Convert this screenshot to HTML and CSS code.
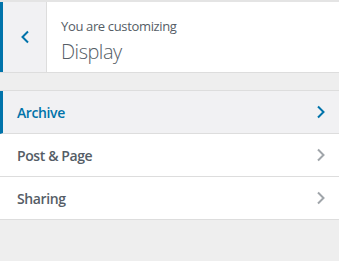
FILE: index.html
```html
<!DOCTYPE html>
<html lang="en">
<head>
  <meta charset="UTF-8" />
  <meta name="viewport" content="width=device-width, initial-scale=1.0" />
  <title>Customizer - Display</title>
  <link rel="stylesheet" href="styles.css">
</head>
<body>

  <!-- Panel header -->
  <div class="panel-header">
    <button class="back-btn" aria-label="Back">
      <svg width="10" height="14" viewBox="0 0 10 14"><path d="M8 1.5 L2.5 7 L8 12.5" fill="none" stroke="currentColor" stroke-width="2"/></svg>
    </button>
    <div class="panel-info">
      <span class="panel-action">You are customizing</span>
      <h3 class="panel-title">Display</h3>
    </div>
  </div>

  <!-- Sections -->
  <ul class="section-list">
    <li class="section-item active">
      <span>Archive</span>
      <svg width="10" height="14" viewBox="0 0 10 14"><path d="M2 1.5 L7.5 7 L2 12.5" fill="none" stroke="currentColor" stroke-width="2"/></svg>
    </li>
    <li class="section-item">
      <span>Post &amp; Page</span>
      <svg width="10" height="14" viewBox="0 0 10 14"><path d="M2 1.5 L7.5 7 L2 12.5" fill="none" stroke="currentColor" stroke-width="2"/></svg>
    </li>
    <li class="section-item">
      <span>Sharing</span>
      <svg width="10" height="14" viewBox="0 0 10 14"><path d="M2 1.5 L7.5 7 L2 12.5" fill="none" stroke="currentColor" stroke-width="2"/></svg>
    </li>
  </ul>

</body>
</html>
```

FILE: styles.css
```css
body {
  margin: 0;
  background-color: #eee;
  font-family: "Open Sans", sans-serif;
  color: #555d66;
}

.panel-header {
  display: flex;
  height: 70px;
  background-color: #fff;
  border-top: 2px solid #e4e4e4;
  border-bottom: 1px solid #ddd;
}

.back-btn {
  width: 47px;
  padding: 0;
  border: none;
  border-left: 3px solid #0073aa;
  border-right: 1px solid #ddd;
  background-color: #f1f1f3;
  color: #0073aa;
  display: flex;
  align-items: center;
  justify-content: center;
}

.panel-info {
  padding: 15px 0 0 14px;
}

.panel-action {
  display: block;
  font-size: 13px;
  line-height: 18px;
  letter-spacing: -0.35px;
}

.panel-title {
  margin: 3px 0 0;
  font-size: 20px;
  font-weight: 300;
  line-height: 27px;
  letter-spacing: -0.5px;
}

.section-list {
  list-style: none;
  margin: 17px 0 0;
  padding: 0;
  border-top: 1px solid #ddd;
}

.section-item {
  display: flex;
  justify-content: space-between;
  align-items: center;
  height: 42px;
  padding: 0 13px 0 17px;
  background-color: #fff;
  border-bottom: 1px solid #ddd;
  font-size: 14px;
  font-weight: 600;
  letter-spacing: -0.4px;
  color: #555d66;
}

.section-item svg {
  color: #a0a5aa;
}

.section-item.active {
  padding-left: 14px;
  border-left: 3px solid #0073aa;
  background-color: #f1f1f3;
  color: #0073aa;
}

.section-item.active svg {
  color: #0073aa;
}
```
